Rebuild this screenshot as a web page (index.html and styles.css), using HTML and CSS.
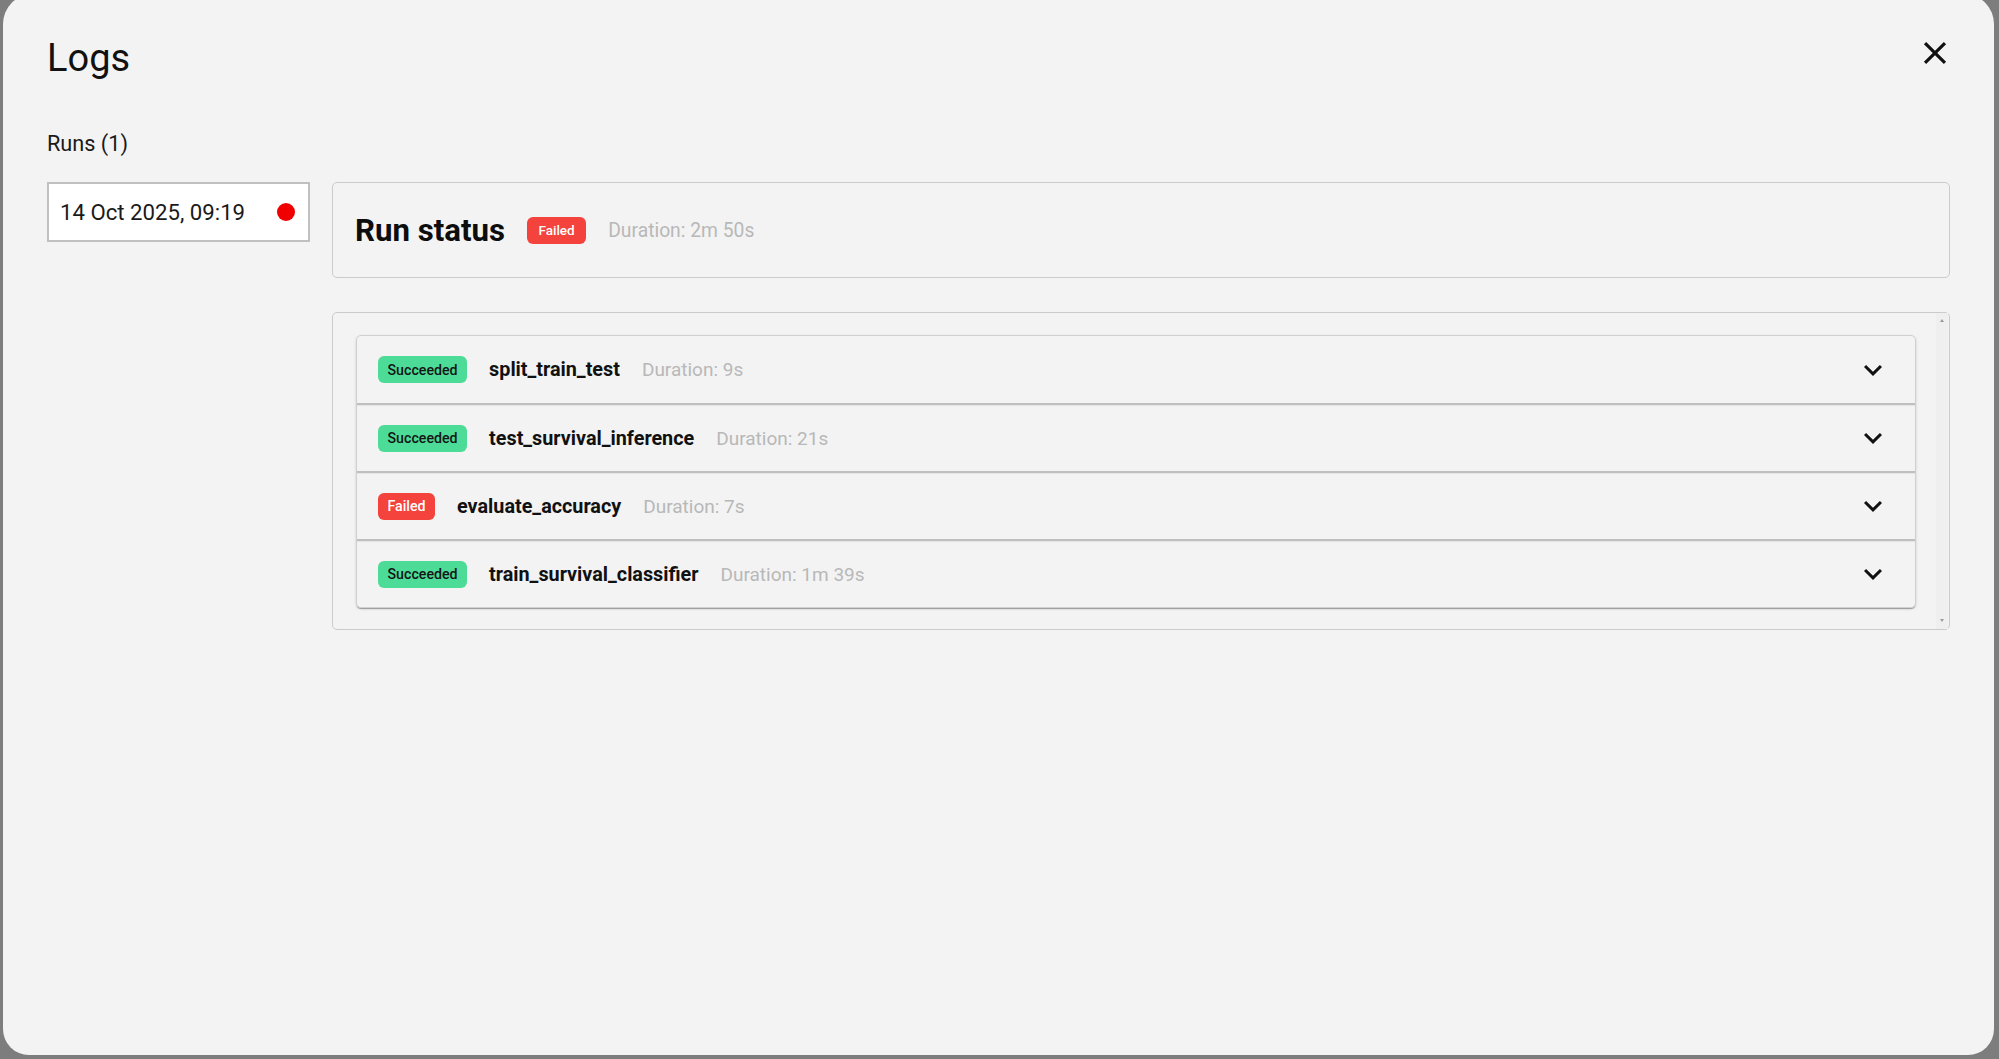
FILE: index.html
```html
<!DOCTYPE html>
<html lang="en">
<head>
<meta charset="utf-8">
<title>Logs</title>
<link rel="stylesheet" href="styles.css">
</head>
<body>
<div class="backdrop">
  <div class="modal">
    <div class="modal-header">
      <h1 class="title">Logs</h1>
      <button class="close" aria-label="Close">
        <svg viewBox="0 0 24 24" width="38" height="38"><path d="M19 6.41 17.59 5 12 10.59 6.41 5 5 6.41 10.59 12 5 17.59 6.41 19 12 13.41 17.59 19 19 17.59 13.41 12z"/></svg>
      </button>
    </div>
    <div class="runs-label">Runs (1)</div>
    <div class="content">
      <div class="runs-list">
        <div class="run-item">
          <span class="run-date">14 Oct 2025, 09:19</span>
          <span class="dot"></span>
        </div>
      </div>
      <div class="run-detail">
        <div class="status-card">
          <span class="status-title">Run status</span>
          <span class="badge badge-failed badge-lg">Failed</span>
          <span class="status-duration">Duration: 2m 50s</span>
        </div>
        <div class="steps-panel">
          <div class="steps-scroll">
            <div class="steps">
              <div class="step">
                <span class="badge badge-success">Succeeded</span>
                <span class="step-name">split_train_test</span>
                <span class="step-duration">Duration: 9s</span>
                <svg class="chevron" viewBox="0 0 24 24" width="36" height="36"><path d="M16.59 8.59 12 13.17 7.41 8.59 6 10l6 6 6-6z"/></svg>
              </div>
              <div class="step">
                <span class="badge badge-success">Succeeded</span>
                <span class="step-name">test_survival_inference</span>
                <span class="step-duration">Duration: 21s</span>
                <svg class="chevron" viewBox="0 0 24 24" width="36" height="36"><path d="M16.59 8.59 12 13.17 7.41 8.59 6 10l6 6 6-6z"/></svg>
              </div>
              <div class="step">
                <span class="badge badge-failed">Failed</span>
                <span class="step-name">evaluate_accuracy</span>
                <span class="step-duration">Duration: 7s</span>
                <svg class="chevron" viewBox="0 0 24 24" width="36" height="36"><path d="M16.59 8.59 12 13.17 7.41 8.59 6 10l6 6 6-6z"/></svg>
              </div>
              <div class="step">
                <span class="badge badge-success">Succeeded</span>
                <span class="step-name">train_survival_classifier</span>
                <span class="step-duration">Duration: 1m 39s</span>
                <svg class="chevron" viewBox="0 0 24 24" width="36" height="36"><path d="M16.59 8.59 12 13.17 7.41 8.59 6 10l6 6 6-6z"/></svg>
              </div>
            </div>
          </div>
          <div class="scrollbar">
            <span class="arrow-up"></span>
            <span class="arrow-down"></span>
          </div>
        </div>
      </div>
    </div>
  </div>
</div>
</body>
</html>
```

FILE: styles.css
```css
* { box-sizing: border-box; }

html, body {
  margin: 0;
  padding: 0;
  height: 1059px;
  overflow: hidden;
}

body {
  background: #7d7d7d;
  font-family: Roboto, "Liberation Sans", sans-serif;
  color: #111;
}

.backdrop {
  height: 1059px;
  padding-left: 3px;
}

.modal {
  margin-top: -6px;
  width: 1991px;
  height: 1061px;
  background: #f3f3f3;
  border-radius: 30px 30px 26px 26px;
  padding: 41px 44px 0 44px;
}

.modal-header {
  display: flex;
  justify-content: space-between;
  align-items: flex-start;
}

.title {
  margin: 0;
  font-size: 38px;
  line-height: 46px;
  font-weight: 400;
  color: #111;
}

.close {
  border: 0;
  background: none;
  padding: 0;
  margin: -1px -4px 0 0;
  width: 38px;
  height: 38px;
  display: flex;
}

.close svg { fill: #111; }

.runs-label {
  margin-top: 50px;
  font-size: 21.7px;
  line-height: 25px;
  color: #1a1a1a;
}

.content {
  margin-top: 26px;
  display: flex;
  align-items: flex-start;
  gap: 22px;
}

.runs-list {
  width: 263px;
  flex: none;
}

.run-item {
  height: 60px;
  border: 2px solid #c0c0c0;
  background: #fff;
  display: flex;
  align-items: center;
  justify-content: space-between;
  padding: 0 13px 0 11px;
}

.run-date {
  font-size: 22.2px;
  color: #1a1a1a;
}

.dot {
  width: 18px;
  height: 18px;
  border-radius: 50%;
  background: #f00000;
}

.run-detail {
  flex: 1;
  min-width: 0;
}

.status-card {
  height: 96px;
  border: 1px solid #cbcbcb;
  border-radius: 5px;
  display: flex;
  align-items: center;
  padding: 0 22px;
}

.status-title {
  font-size: 31.2px;
  font-weight: 700;
  color: #0d0d0d;
  margin-right: 22px;
}

.status-duration {
  font-size: 19.3px;
  color: #b8b8b8;
  margin-left: 22px;
}

.badge {
  display: inline-flex;
  align-items: center;
  height: 27px;
  border-radius: 6px;
  padding: 0 9.5px;
  font-size: 14.2px;
  font-weight: 500;
  flex: none;
}

.badge-lg {
  padding: 0 11.5px;
  font-size: 13.5px;
}

.badge-failed {
  background: #f4433c;
  color: #fff;
}

.badge-success {
  background: #4cdc98;
  color: #141414;
}

.steps-panel {
  margin-top: 34px;
  height: 318px;
  border: 1px solid #cbcbcb;
  border-radius: 5px;
  display: flex;
}

.steps-scroll {
  flex: 1;
  padding: 22px 20px 22px 23px;
}

.steps {
  border: 1px solid #d0d0d0;
  border-radius: 5px;
  box-shadow: 0 2px 1px -1px rgba(0,0,0,0.2), 0 1px 1px 0 rgba(0,0,0,0.14), 0 1px 3px 0 rgba(0,0,0,0.12);
  overflow: hidden;
}

.step {
  height: 68px;
  display: flex;
  align-items: center;
  padding: 0 24px 0 21px;
  border-top: 2px solid #bfbfbf;
  box-shadow: inset 0 1px 1px rgba(0,0,0,0.06);
}

.step:first-child {
  height: 67px;
  border-top: 0;
  box-shadow: none;
}

.step-name {
  margin-left: 22px;
  font-size: 19.8px;
  font-weight: 700;
  color: #111;
}

.step-duration {
  margin-left: 22px;
  font-size: 19px;
  color: #b8b8b8;
}

.chevron {
  margin-left: auto;
  fill: #111;
  flex: none;
}

.scrollbar {
  width: 12px;
  margin: 0 1px 0 0;
  background: #efefef;
  display: flex;
  flex-direction: column;
  justify-content: space-between;
  align-items: center;
  padding: 6px 0 7px;
}

.arrow-up {
  width: 0;
  height: 0;
  border-left: 2.5px solid transparent;
  border-right: 2.5px solid transparent;
  border-bottom: 3px solid #9a9a9a;
}

.arrow-down {
  width: 0;
  height: 0;
  border-left: 2.5px solid transparent;
  border-right: 2.5px solid transparent;
  border-top: 3px solid #9a9a9a;
}
```
